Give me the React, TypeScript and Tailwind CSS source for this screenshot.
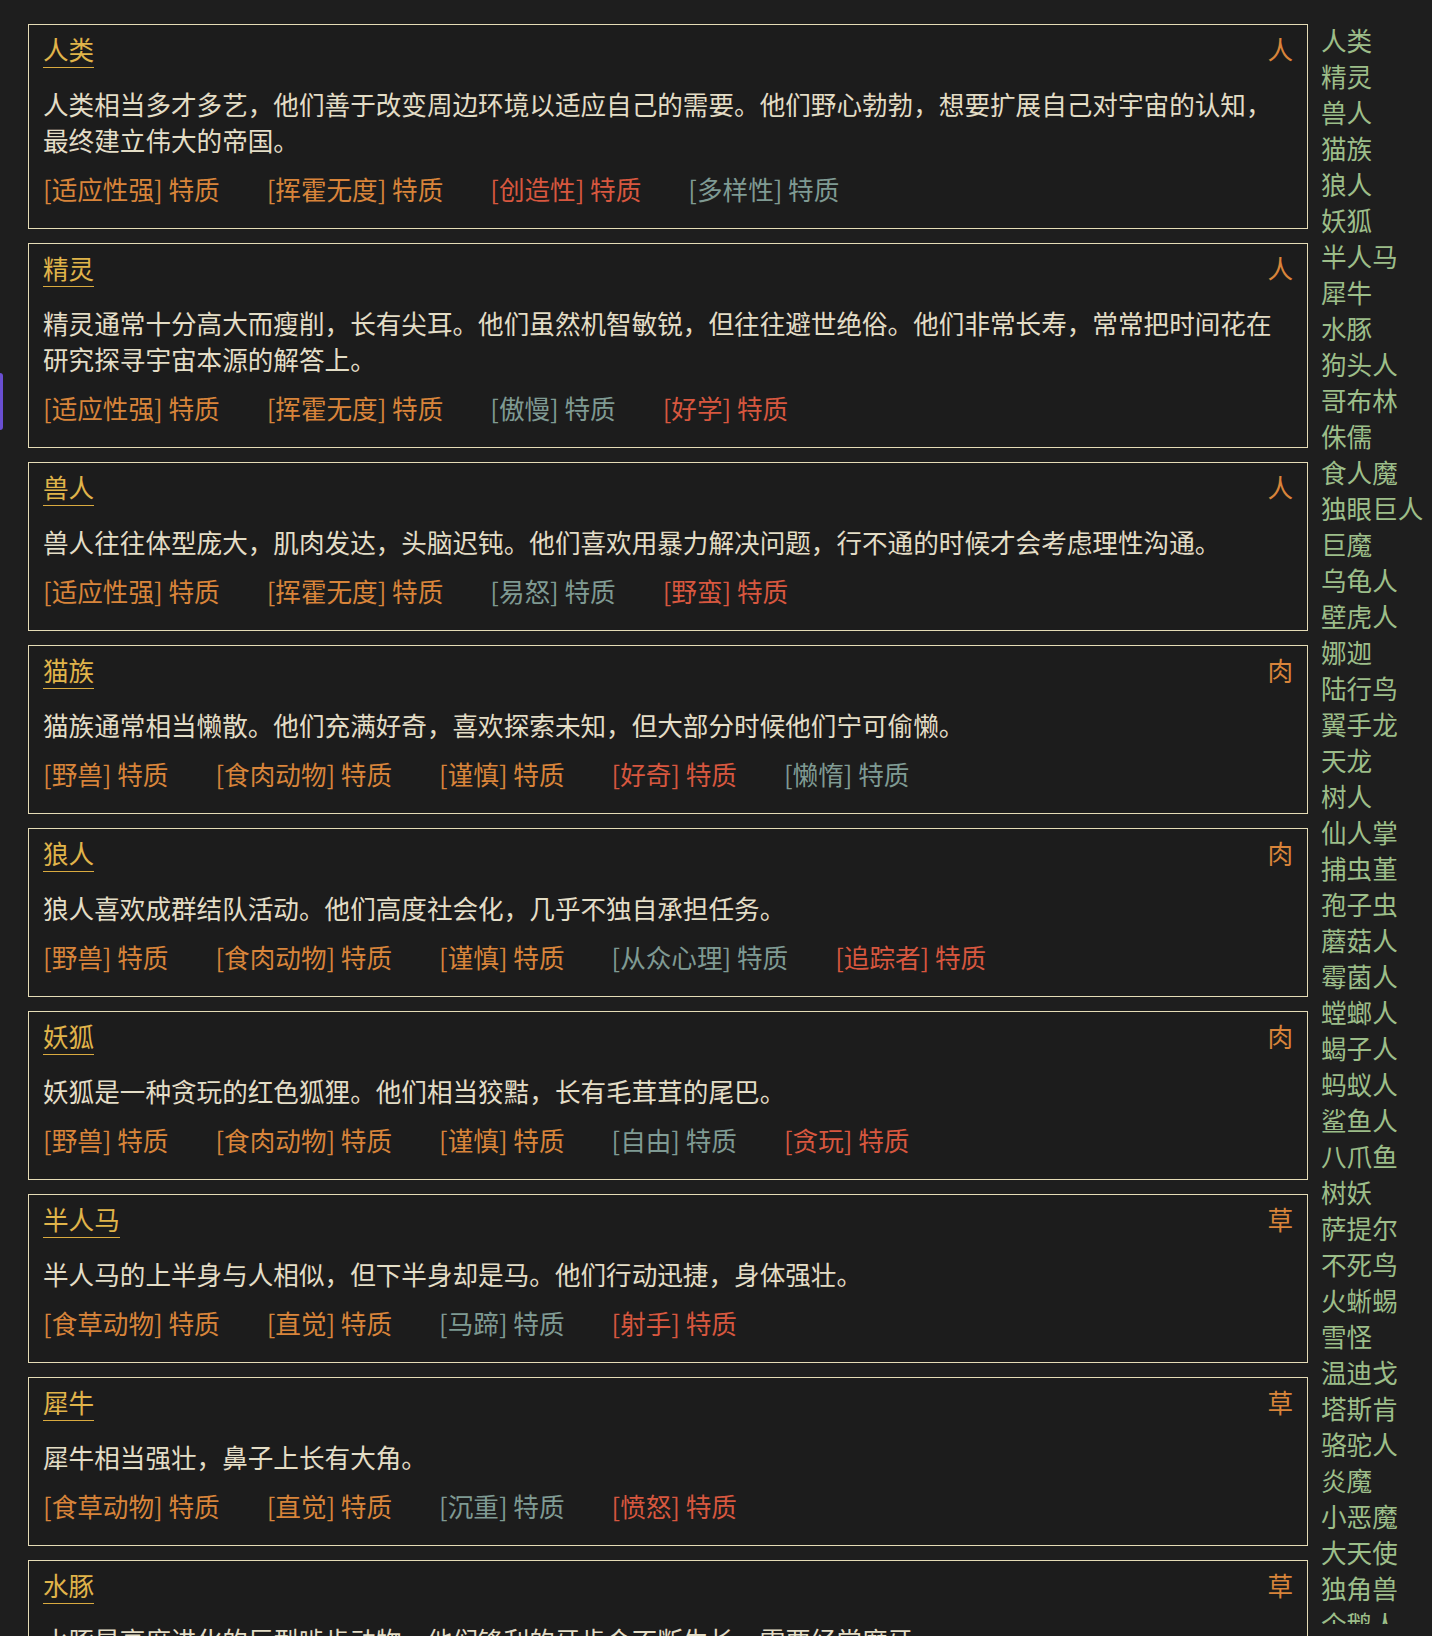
import React from 'react';

type Tone = 'o' | 'r' | 'g';

interface Race {
    name: string;
    diet: string;
    desc: string;
    traits: [string, Tone][];
}

const races: Race[] = [
    {
        name: '人类', diet: '人',
        desc: '人类相当多才多艺，他们善于改变周边环境以适应自己的需要。他们野心勃勃，想要扩展自己对宇宙的认知，最终建立伟大的帝国。',
        traits: [['适应性强', 'o'], ['挥霍无度', 'o'], ['创造性', 'r'], ['多样性', 'g']],
    },
    {
        name: '精灵', diet: '人',
        desc: '精灵通常十分高大而瘦削，长有尖耳。他们虽然机智敏锐，但往往避世绝俗。他们非常长寿，常常把时间花在研究探寻宇宙本源的解答上。',
        traits: [['适应性强', 'o'], ['挥霍无度', 'o'], ['傲慢', 'g'], ['好学', 'r']],
    },
    {
        name: '兽人', diet: '人',
        desc: '兽人往往体型庞大，肌肉发达，头脑迟钝。他们喜欢用暴力解决问题，行不通的时候才会考虑理性沟通。',
        traits: [['适应性强', 'o'], ['挥霍无度', 'o'], ['易怒', 'g'], ['野蛮', 'r']],
    },
    {
        name: '猫族', diet: '肉',
        desc: '猫族通常相当懒散。他们充满好奇，喜欢探索未知，但大部分时候他们宁可偷懒。',
        traits: [['野兽', 'o'], ['食肉动物', 'o'], ['谨慎', 'o'], ['好奇', 'r'], ['懒惰', 'g']],
    },
    {
        name: '狼人', diet: '肉',
        desc: '狼人喜欢成群结队活动。他们高度社会化，几乎不独自承担任务。',
        traits: [['野兽', 'o'], ['食肉动物', 'o'], ['谨慎', 'o'], ['从众心理', 'g'], ['追踪者', 'r']],
    },
    {
        name: '妖狐', diet: '肉',
        desc: '妖狐是一种贪玩的红色狐狸。他们相当狡黠，长有毛茸茸的尾巴。',
        traits: [['野兽', 'o'], ['食肉动物', 'o'], ['谨慎', 'o'], ['自由', 'g'], ['贪玩', 'r']],
    },
    {
        name: '半人马', diet: '草',
        desc: '半人马的上半身与人相似，但下半身却是马。他们行动迅捷，身体强壮。',
        traits: [['食草动物', 'o'], ['直觉', 'o'], ['马蹄', 'g'], ['射手', 'r']],
    },
    {
        name: '犀牛', diet: '草',
        desc: '犀牛相当强壮，鼻子上长有大角。',
        traits: [['食草动物', 'o'], ['直觉', 'o'], ['沉重', 'g'], ['愤怒', 'r']],
    },
    {
        name: '水豚', diet: '草',
        desc: '水豚是高度进化的巨型啮齿动物。他们锋利的牙齿会不断生长，需要经常磨牙。',
        traits: [['食草动物', 'o'], ['直觉', 'o'], ['温顺', 'g'], ['水栖', 'r']],
    },
];

const index = [
    '人类', '精灵', '兽人', '猫族', '狼人', '妖狐', '半人马', '犀牛', '水豚', '狗头人', '哥布林', '侏儒',
    '食人魔', '独眼巨人', '巨魔', '乌龟人', '壁虎人', '娜迦', '陆行鸟', '翼手龙', '天龙', '树人', '仙人掌',
    '捕虫堇', '孢子虫', '蘑菇人', '霉菌人', '螳螂人', '蝎子人', '蚂蚁人', '鲨鱼人', '八爪鱼', '树妖', '萨提尔',
    '不死鸟', '火蜥蜴', '雪怪', '温迪戈', '塔斯肯', '骆驼人', '炎魔', '小恶魔', '大天使', '独角兽', '企鹅人',
];

const toneClass: Record<Tone, string> = {
    o: 'text-[#d8843a]',
    r: 'text-[#d7573f]',
    g: 'text-[#7f9a93]',
};

const RaceCard: React.FC<{ race: Race }> = ({ race }) => (
    <div className="border border-[#e5dcb6] bg-[#1c1c1c] px-[14px] pt-2 pb-[21px]">
        <div className="flex items-start justify-between">
            <span className="border-b-[1.5px] border-[#d9aa3f] pb-[3px] text-[#e0b44a] leading-[31px]">{race.name}</span>
            <span className="text-[#d8843a] leading-[31px]">{race.diet}</span>
        </div>
        <p className="mt-[18px] text-[#e3ddc6] leading-9">{race.desc}</p>
        <div className="mt-[13px] flex flex-wrap gap-x-[47px] leading-9">
            {race.traits.map(([t, tone]) => (
                <span key={t} className={toneClass[tone]}>[{t}] 特质</span>
            ))}
        </div>
    </div>
);

export default function App() {
    return (
        <div
            className="relative h-[1636px] overflow-hidden bg-[#1e1e1e] text-[25.6px]"
            style={{ fontFamily: '"Noto Sans CJK SC", "Noto Sans", sans-serif' }}
        >
            <div className="absolute left-0 top-[373px] h-[57px] w-[3px] rounded-r bg-[#6a4fd2]" />
            <div className="flex pt-[22px] pl-[28px]">
                <div className="mt-[2px] flex w-[1280px] shrink-0 flex-col gap-[14px]">
                    {races.map(r => <RaceCard key={r.name} race={r} />)}
                </div>
                <ul className="ml-[13px] h-[1602px] flex-1 overflow-hidden whitespace-nowrap text-[#9cbd89] leading-9">
                    {index.map(n => <li key={n}>{n}</li>)}
                </ul>
            </div>
        </div>
    );
}
